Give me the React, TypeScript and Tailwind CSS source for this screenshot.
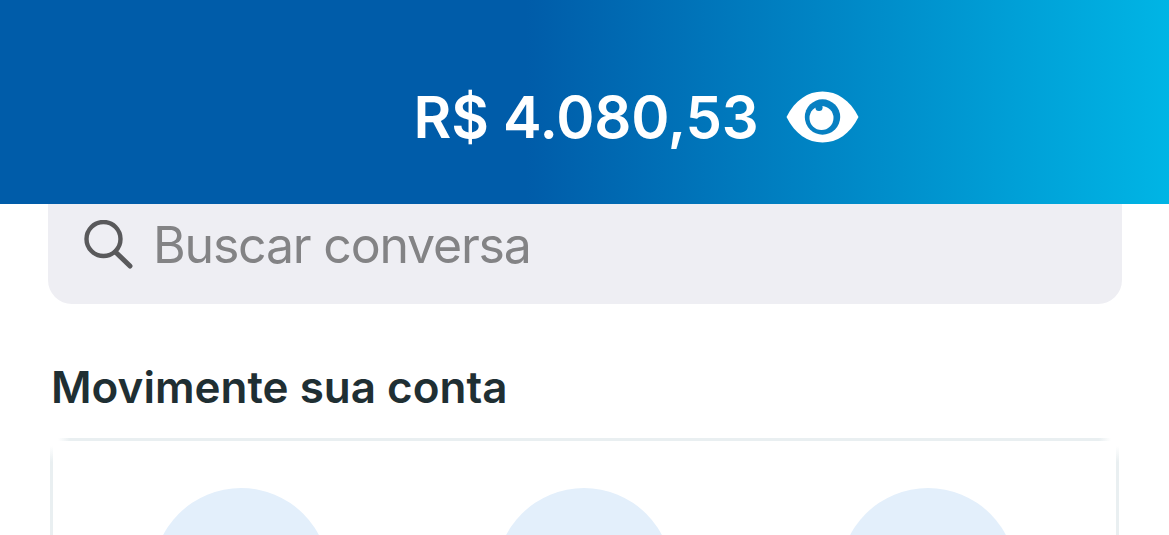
import React from 'react';

const EyeIcon = () => (
  <svg width="73" height="52" viewBox="0 0 73 52" className="block shrink-0">
    <path d="M0.5 26 C9 9 22 0.5 36.5 0.5 C51 0.5 64 9 72.5 26 C64 43 51 51.5 36.5 51.5 C22 51.5 9 43 0.5 26 Z" fill="#fff" />
    <circle cx="36.5" cy="26" r="17.7" fill="#0780c2" />
    <circle cx="35.5" cy="27" r="12" fill="#fff" />
    <circle cx="33" cy="16.5" r="3.6" fill="#0780c2" />
  </svg>
);

const SearchIcon = () => (
  <svg width="50" height="50" viewBox="0 0 50 50" fill="none" stroke="#59595b" strokeLinecap="round" className="block shrink-0">
    <circle cx="20.5" cy="19" r="17" strokeWidth="4.4" />
    <path d="M32.5 32 L47 46" strokeWidth="5" />
  </svg>
);

export default function App() {
  return (
    <div className="h-[535px] w-[1169px] overflow-hidden bg-white font-['Inter',sans-serif]">
      <header className="flex h-[204px] items-end justify-center bg-[linear-gradient(90deg,#005ca9_0%,#005ca9_45%,#00b5e5_100%)] pb-[61px] pl-[104px]">
        <div className="flex items-center gap-[28px]">
          <span className="text-[58px] leading-[52px] font-semibold tracking-[-0.2px] text-white">R$ 4.080,53</span>
          <EyeIcon />
        </div>
      </header>

      <div className="mr-[47px] ml-[48px] flex h-[100px] items-start gap-[20px] rounded-b-[24px] bg-[#eeeef3] pt-[16px] pl-[35px]">
        <SearchIcon />
        <span className="text-[50px] leading-[50px] tracking-[-1.2px] text-[#838385]">Buscar conversa</span>
      </div>

      <h2 className="mt-[57px] ml-[51px] text-[44px] leading-[52px] font-semibold text-[#1f2f33]">Movimente sua conta</h2>

      <div className="mx-[50px] mt-[25px] grid h-[200px] grid-cols-3 bg-[linear-gradient(90deg,transparent_8px,#e9eff1_20px,#e9eff1_calc(100%-20px),transparent_calc(100%-8px)),linear-gradient(180deg,transparent_8px,#e9eff1_24px),linear-gradient(180deg,transparent_8px,#e9eff1_24px)] bg-size-[100%_3px,3px_100%,3px_100%] bg-position-[0_0,0_0,100%_0] bg-no-repeat px-[19px] pt-[50px]">
        <div className="flex justify-center">
          <div className="h-[176px] w-[176px] rounded-full bg-[#e3effb]" />
        </div>
        <div className="flex justify-center">
          <div className="h-[176px] w-[176px] rounded-full bg-[#e3effb]" />
        </div>
        <div className="flex justify-center">
          <div className="h-[176px] w-[176px] rounded-full bg-[#e3effb]" />
        </div>
      </div>
    </div>
  );
}
